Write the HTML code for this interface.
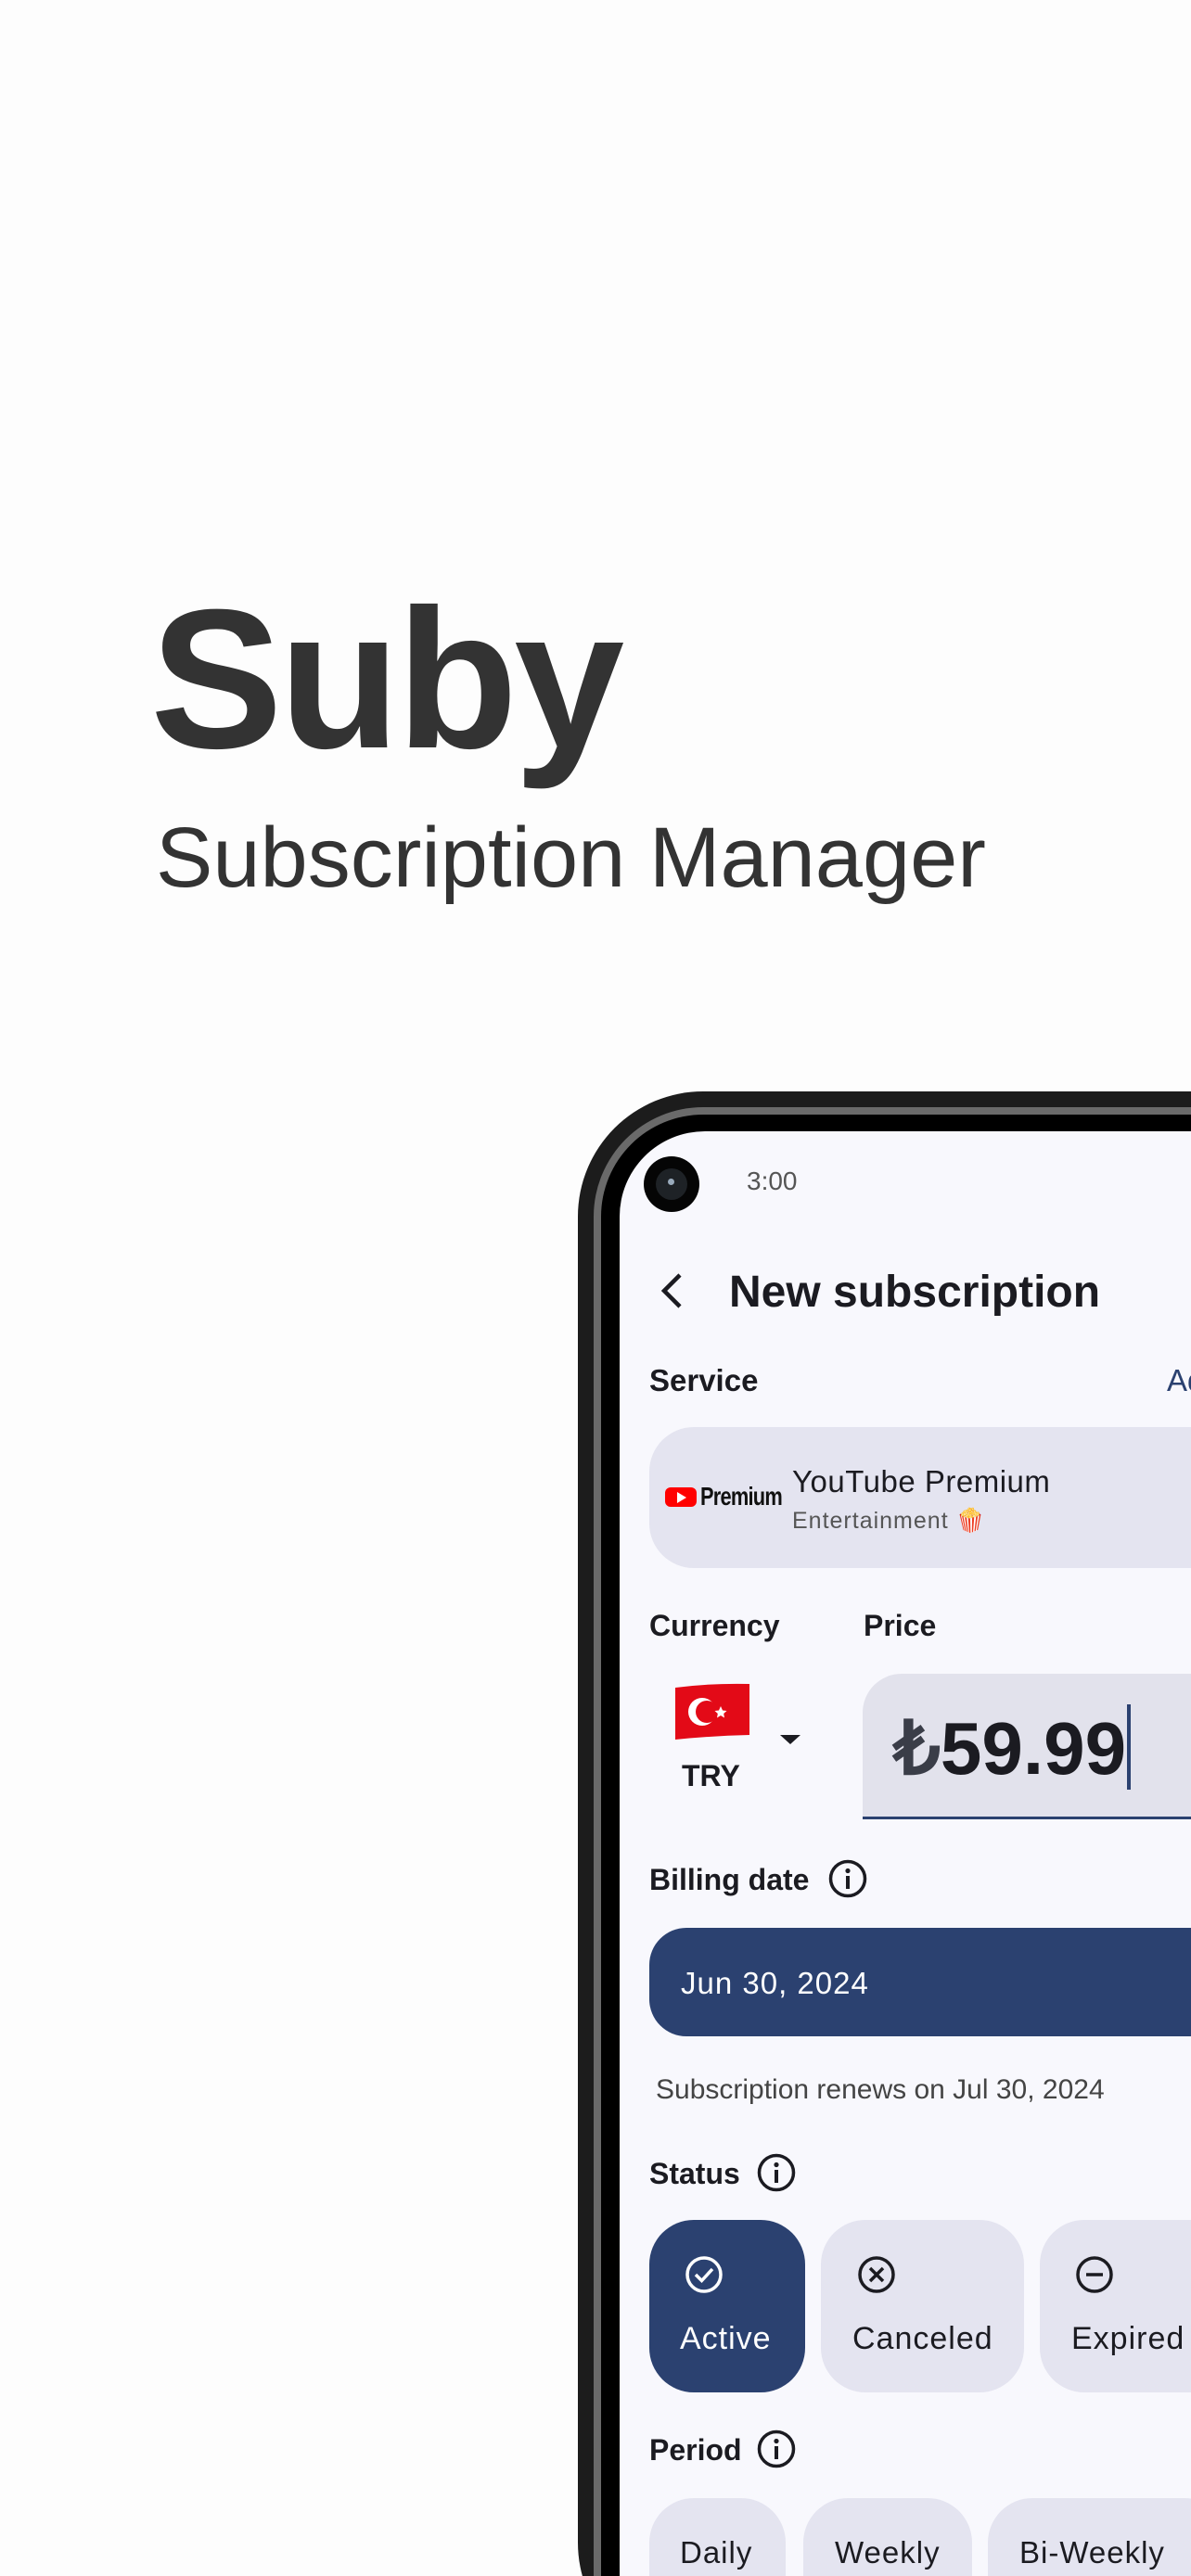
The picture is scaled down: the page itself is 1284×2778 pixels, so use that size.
<!DOCTYPE html>
<html><head><meta charset="utf-8"><style>
*{margin:0;padding:0;box-sizing:border-box}
html,body{width:1284px;height:2778px;overflow:hidden;background:#fdfdfd;font-family:"Liberation Sans",sans-serif}
#w{position:relative;width:1284px;height:2778px;overflow:hidden}
.abs{position:absolute;white-space:nowrap}
.frame{position:absolute;left:623px;top:1177px;width:900px;height:1700px;border-radius:135px;background:#1c1c1c}
.rim{position:absolute;left:640px;top:1194px;width:900px;height:1700px;border-radius:118px;background:#6a6a6a}
.bez{position:absolute;left:648px;top:1202px;width:900px;height:1700px;border-radius:110px;background:#000}
.screen{position:absolute;left:668px;top:1220px;width:900px;height:1700px;border-top-left-radius:92px;background:#f8f8fd}
.lbl{font-weight:bold;font-size:32px;color:#1b1b21}
.chip{position:absolute;background:#e4e4f0;border-radius:48px}
.t{font-size:34px;color:#1b1b21;letter-spacing:1px}
</style></head><body><div id="w">
<div class="abs" style="left:162px;top:610px;font-size:214px;font-weight:bold;color:#333;letter-spacing:-4px">Suby</div>
<div class="abs" style="left:168px;top:873px;font-size:92px;color:#333">Subscription Manager</div>

<div class="frame"></div><div class="rim"></div><div class="bez"></div><div class="screen"></div>
<div class="abs" style="left:694px;top:1247px;width:60px;height:60px;border-radius:50%;background:#050505"></div>
<div class="abs" style="left:707px;top:1260px;width:34px;height:34px;border-radius:50%;background:#1e2226"></div>
<div class="abs" style="left:720px;top:1271px;width:7px;height:7px;border-radius:50%;background:#9ab"></div>
<div class="abs" style="left:805px;top:1258px;font-size:28px;color:#555">3:00</div>

<svg class="abs" style="left:705px;top:1370px" width="40" height="44" viewBox="0 0 40 44"><path d="M28 5 L11 22 L28 39" fill="none" stroke="#1b1b21" stroke-width="4.5"/></svg>
<div class="abs" style="left:786px;top:1366px;font-size:48px;font-weight:bold;color:#1b1b21">New subscription</div>

<div class="abs lbl" style="left:700px;top:1470px;font-size:33px">Service</div>
<div class="abs" style="left:1258px;top:1470px;font-size:33px;color:#2b4170">Ad</div>
<div class="abs" style="left:700px;top:1539px;width:700px;height:152px;border-radius:48px;background:#e4e4f0"></div>
<div class="abs" style="left:717px;top:1604px;width:34px;height:21px;border-radius:6px;background:#f00"></div>
<div class="abs" style="left:730px;top:1609px;width:0;height:0;border-left:10px solid #fff;border-top:6px solid transparent;border-bottom:6px solid transparent"></div>
<div class="abs" style="left:755px;top:1598px;font-size:28px;font-weight:bold;color:#111;transform:scaleX(.78);transform-origin:left;letter-spacing:-1px">Premium</div>
<div class="abs" style="left:854px;top:1579px;font-size:33px;color:#1b1b21;letter-spacing:.5px">YouTube Premium</div>
<div class="abs" style="left:854px;top:1626px;font-size:25px;color:#555;letter-spacing:1px">Entertainment <span style="color:#e33">🍿</span></div>

<div class="abs lbl" style="left:700px;top:1735px">Currency</div>
<div class="abs lbl" style="left:931px;top:1735px">Price</div>
<svg class="abs" style="left:727px;top:1815px" width="82" height="62" viewBox="0 0 82 62"><path d="M1 5 Q40 0 81 1 L81 56 Q40 57 1 61Z" fill="#e30a17"/><circle cx="30" cy="31" r="15" fill="#fff"/><circle cx="35" cy="31" r="12" fill="#e30a17"/><polygon points="50,25 52,29.5 56.5,30 53.2,33 54,37.5 50,35 46,37.5 46.8,33 43.5,30 48,29.5" fill="#fff"/></svg>
<div class="abs" style="left:735px;top:1897px;font-size:32px;font-weight:bold;color:#1b1b21">TRY</div>
<div class="abs" style="left:841px;top:1871px;width:0;height:0;border-top:10px solid #1b1b21;border-left:11px solid transparent;border-right:11px solid transparent"></div>
<div class="abs" style="left:930px;top:1805px;width:500px;height:157px;border-radius:42px 42px 0 0;background:#e2e2ec"></div>
<div class="abs" style="left:930px;top:1959px;width:400px;height:3px;background:#2b4170"></div>
<div class="abs" style="left:963px;top:1839px;font-size:80px;font-weight:bold;color:#1b1b21"><span style="color:#3a3d48">₺</span>59.99</div>
<div class="abs" style="left:1215px;top:1838px;width:4px;height:92px;background:#2b4170"></div>

<div class="abs lbl" style="left:700px;top:2009px">Billing date</div>
<svg class="abs" style="left:892px;top:2004px" width="44" height="44" viewBox="0 0 44 44"><circle cx="22" cy="22" r="18.5" fill="none" stroke="#1b1b21" stroke-width="3.5"/><rect x="20" y="19" width="4" height="14" fill="#1b1b21"/><circle cx="22" cy="13.5" r="2.6" fill="#1b1b21"/></svg>
<div class="abs" style="left:700px;top:2079px;width:700px;height:117px;border-radius:40px;background:#2b4170"></div>
<div class="abs" style="left:734px;top:2120px;font-size:33px;color:#fff;letter-spacing:1px">Jun 30, 2024</div>
<div class="abs" style="left:707px;top:2237px;font-size:30px;color:#444">Subscription renews on Jul 30, 2024</div>

<div class="abs lbl" style="left:700px;top:2326px">Status</div>
<svg class="abs" style="left:815px;top:2321px" width="44" height="44" viewBox="0 0 44 44"><circle cx="22" cy="22" r="18.5" fill="none" stroke="#1b1b21" stroke-width="3.5"/><rect x="20" y="19" width="4" height="14" fill="#1b1b21"/><circle cx="22" cy="13.5" r="2.6" fill="#1b1b21"/></svg>
<div class="chip" style="left:700px;top:2394px;width:168px;height:186px;background:#2b4170"></div>
<div class="chip" style="left:885px;top:2394px;width:219px;height:186px"></div>
<div class="chip" style="left:1121px;top:2394px;width:260px;height:186px"></div>
<svg class="abs" style="left:737px;top:2431px" width="44" height="44" viewBox="0 0 44 44"><circle cx="22" cy="22" r="18" fill="none" stroke="#fff" stroke-width="3.5"/><path d="M13 22 L19.5 28.5 L31 16" fill="none" stroke="#fff" stroke-width="3.5"/></svg>
<svg class="abs" style="left:923px;top:2431px" width="44" height="44" viewBox="0 0 44 44"><circle cx="22" cy="22" r="18" fill="none" stroke="#1b1b21" stroke-width="3.5"/><path d="M15 15 L29 29 M29 15 L15 29" fill="none" stroke="#1b1b21" stroke-width="3.5"/></svg>
<svg class="abs" style="left:1158px;top:2431px" width="44" height="44" viewBox="0 0 44 44"><circle cx="22" cy="22" r="18" fill="none" stroke="#1b1b21" stroke-width="3.5"/><path d="M13 22 L31 22" fill="none" stroke="#1b1b21" stroke-width="3.5"/></svg>
<div class="abs t" style="left:733px;top:2503px;color:#fff">Active</div>
<div class="abs t" style="left:919px;top:2503px">Canceled</div>
<div class="abs t" style="left:1155px;top:2503px">Expired</div>

<div class="abs lbl" style="left:700px;top:2624px">Period</div>
<svg class="abs" style="left:815px;top:2619px" width="44" height="44" viewBox="0 0 44 44"><circle cx="22" cy="22" r="18.5" fill="none" stroke="#1b1b21" stroke-width="3.5"/><rect x="20" y="19" width="4" height="14" fill="#1b1b21"/><circle cx="22" cy="13.5" r="2.6" fill="#1b1b21"/></svg>
<div class="chip" style="left:700px;top:2694px;width:147px;height:186px"></div>
<div class="chip" style="left:866px;top:2694px;width:182px;height:186px"></div>
<div class="chip" style="left:1065px;top:2694px;width:260px;height:186px"></div>
<div class="abs t" style="left:733px;top:2734px;font-size:33px">Daily</div>
<div class="abs t" style="left:900px;top:2734px;font-size:33px">Weekly</div>
<div class="abs t" style="left:1099px;top:2734px;font-size:33px">Bi-Weekly</div>
</div></body></html>
